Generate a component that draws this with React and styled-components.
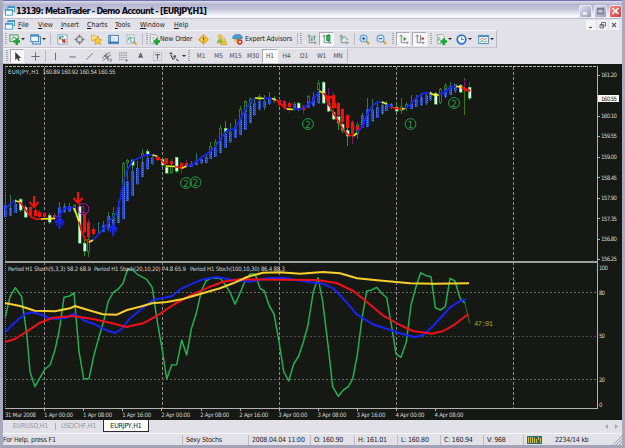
import styled, { createGlobalStyle, css } from "styled-components";

const GlobalStyle = createGlobalStyle`
  * { box-sizing: border-box; }
  body {
    margin: 0;
    overflow: hidden;
    font-family: "DejaVu Sans Condensed", "DejaVu Sans", sans-serif;
    font-size: 7px;
    color: #1c1c24;
  }
  svg { display: block; }
`

// [x, kind, body top, body bottom, wick high, wick low]
const candles = [
  [5.5, "b", 205, 217, 195, 217], [10.4, "b", 208, 216, 195, 216], [15.3, "b", 204, 213, 199, 213],
  [20.3, "w", 199, 210, 198, 212], [25.2, "w", 207, 217, 205, 218], [30, "r", 207, 216, 206, 218],
  [35, "r", 210, 216, 207, 217], [39.9, "r", 212, 217, 210, 219], [44.8, "r", 213, 217, 212, 220],
  [49.7, "w", 215, 222, 213, 224], [54.5, "r", 215, 219, 213, 221], [59.4, "b", 207, 217, 202, 218],
  [64.3, "b", 206, 212, 203, 213], [69.2, "b", 206, 212, 203, 212], [74, "h", 205, 211, 204, 213],
  [79, "w", 206, 243, 204, 244], [84, "w", 243, 251, 238, 256], [84, "r", 214, 232, 212, 234],
  [88.7, "h", 239, 252, 237, 257], [88.7, "r", 222, 237, 219, 237], [93.5, "r", 229, 234, 226, 236],
  [98.4, "d", 229, 231, 222, 235], [103.5, "b", 225, 232, 221, 232], [108.3, "b", 216, 230, 212, 231],
  [113.2, "b", 219, 229, 214, 229], [113.2, "h", 213, 220, 207, 222], [118, "b", 207, 223, 201, 223],
  [123, "h", 163, 200, 162, 200], [123, "b", 186, 219, 186, 219], [127.7, "b", 181, 201, 181, 201],
  [127.7, "h", 160, 163, 159, 180], [132.6, "w", 160, 165, 159, 168], [132.6, "b", 171, 196, 168, 196],
  [137.5, "b", 168, 184, 161, 185], [142.4, "h", 153, 157, 149, 162], [142.4, "b", 162, 177, 160, 177],
  [147.3, "w", 151, 154, 149, 156], [147.3, "b", 158, 169, 156, 170], [152.2, "b", 157, 164, 154, 165],
  [157, "r", 157, 160, 155, 161], [162, "w", 159, 165, 157, 167], [166.9, "r", 158, 164, 158, 164],
  [166.9, "w", 167, 173, 165, 174], [171.8, "r", 161, 164, 159, 164], [171.8, "h", 166, 173, 164, 174],
  [176.6, "w", 157, 171, 157, 173], [181.5, "r", 163, 169, 162, 174], [186.4, "r", 163, 166, 160, 167],
  [191.2, "b", 164, 167, 161, 167], [196.2, "b", 161, 165, 153, 165], [201, "b", 159, 163, 156, 164],
  [206, "b", 157, 163, 153, 163], [210.8, "h", 146, 152, 142, 156], [210.8, "b", 152, 159, 151, 159],
  [215.7, "h", 142, 147, 139, 150], [215.7, "b", 148, 157, 147, 157], [220.6, "h", 128, 140, 125, 143],
  [220.6, "b", 141, 153, 139, 153], [225.5, "w", 128, 132, 121, 135], [225.5, "b", 134, 148, 132, 148],
  [230.4, "b", 132, 142, 123, 143], [235.3, "b", 127, 138, 119, 138], [240.2, "h", 109, 120, 106, 124],
  [240.2, "b", 119, 135, 118, 135], [245, "h", 101, 112, 100, 116], [245, "b", 113, 130, 112, 130],
  [250, "h", 99, 104, 97, 108], [250, "b", 106, 123, 104, 123], [254.8, "b", 103, 115, 98, 116],
  [259.7, "h", 96, 100, 94, 102], [259.7, "b", 101, 109, 99, 111], [264.6, "b", 101, 107, 95, 110],
  [269.5, "b", 97, 104, 92, 105], [274.4, "h", 98, 101, 96, 103], [279.6, "r", 100, 105, 99, 107],
  [284.5, "r", 101, 108, 100, 110], [289, "r", 103, 107, 102, 113], [294, "b", 104, 109, 102, 111],
  [298.8, "w", 103, 108, 102, 111], [303.7, "r", 106, 110, 105, 114], [308.6, "h", 96, 106, 95, 108],
  [308.6, "b", 101, 108, 101, 108], [313.5, "b", 97, 106, 92, 107], [318.4, "h", 83, 90, 80, 93],
  [318.4, "b", 92, 103, 92, 104], [323.3, "w", 82, 103, 81, 104], [328.2, "w", 103, 111, 101, 112],
  [328.2, "r", 97, 105, 88, 106], [333, "w", 112, 119, 110, 120], [333, "r", 95, 108, 92, 111],
  [338, "w", 116, 123, 114, 130], [338, "r", 103, 115, 102, 117], [342.8, "w", 124, 130, 122, 133],
  [342.8, "r", 109, 122, 108, 123], [347.7, "w", 130, 136, 127, 146], [347.7, "r", 115, 128, 114, 128],
  [352.6, "r", 122, 134, 120, 144], [357.5, "h", 124, 134, 122, 139], [357.5, "r", 126, 130, 123, 131],
  [362.4, "b", 115, 128, 113, 128], [367.2, "b", 109, 127, 98, 127], [372.2, "b", 110, 121, 99, 122],
  [377, "b", 107, 118, 103, 118], [382, "b", 105, 114, 101, 115], [386.8, "b", 104, 111, 101, 111],
  [391.7, "b", 104, 108, 103, 109], [396.6, "w", 107, 111, 103, 112], [401.5, "h", 106, 111, 98, 114],
  [406.4, "h", 104, 108, 102, 111], [411.3, "b", 103, 109, 95, 109], [416.2, "b", 99, 107, 95, 107],
  [421, "b", 97, 105, 93, 106], [426, "b", 95, 103, 92, 105], [430.8, "b", 92, 100, 91, 101],
  [435.6, "w", 93, 104, 92, 105], [440.6, "h", 89, 103, 88, 104], [445.4, "h", 85, 89, 83, 97],
  [445.4, "b", 89, 97, 88, 98], [450.4, "b", 86, 95, 82, 95], [455.2, "b", 84, 91, 84, 93],
  [460, "w", 85, 92, 84, 93], [464.9, "l", 88, 88, 78, 115], [469.8, "w", 87, 98, 84, 100],
]

const maLine = [
  ["#1724f5", "5,210 10,204 15,200.7"],
  ["#f7ee10", "15,200.7 20,202"],
  ["#f5100c", "20,202 26.7,211.7 31.7,217.3 36.7,219.3 40.7,219"],
  ["#f7ee10", "40.7,219 55,218.3"],
  ["#1724f5", "55,218 59.3,215 64,209.3 69,207.3 74,208"],
  ["#f7ee10", "74,208 75.3,211 79,221.7"],
  ["#f5100c", "79,221.7 81.7,231.7 85,239.3 89,242.3"],
  ["#f7ee10", "89,242.3 93,240"],
  ["#1724f5", "93,240 100,233 108,222.7 116.7,213.3 120,199.3 123.3,183.3 127.3,170 132.7,160.7 138.3,158.3 146.7,154.7 152.7,155"],
  ["#f7ee10", "152.7,155 157,156.3"],
  ["#f5100c", "157,156.3 162.7,161.7 166,166"],
  ["#f7ee10", "166,166 175,166.5"],
  ["#f5100c", "175,166.5 181.7,168.3"],
  ["#f7ee10", "181.7,168.3 186.7,166"],
  ["#1724f5", "186.7,166 191.7,165 196.7,161.3 203.3,156 210,151.7 216.7,145 221.7,136.7 226.7,130.7 235,128.7 240,120 245,110 250,102.7 255,98"],
  ["#f7ee10", "255,98 264,98.5"],
  ["#1724f5", "264,98.3 270,98 274,100"],
  ["#f7ee10", "272,98.5 276,99.7"],
  ["#f5100c", "276,99.7 281.7,105 286.7,108.8"],
  ["#f7ee10", "286.7,108.8 293,109.5"],
  ["#1724f5", "293,109.2 301.7,109 306.7,105.7 311.7,102.3 316.7,94.3 319.3,91"],
  ["#f7ee10", "319.3,91 323.3,93"],
  ["#f5100c", "323.3,93 325,95 328.3,103.3 333.3,113.3 338.3,121 343.3,130 348.3,135 353.3,136"],
  ["#f7ee10", "353.3,136 357,133"],
  ["#1724f5", "357,133 363.3,125 366.7,115 371.7,106.7 376.7,102.3 381.7,102"],
  ["#f7ee10", "381.7,102 387,104"],
  ["#1724f5", "387,104 391,106.5"],
  ["#f5100c", "391,106.5 395,108.3 401.7,109"],
  ["#f7ee10", "401.7,109 405,108.5"],
  ["#1724f5", "405,108.5 411.7,103.3 416.7,97.3 425,92.7 430,93"],
  ["#f7ee10", "430,93 434,95 439,95"],
  ["#1724f5", "439,95 445,91.7 451.7,87 456,86.3"],
  ["#f7ee10", "456,86.3 461.7,87"],
]

const stoch = {
  green: "5.3,317.3 10,296.7 15.3,287.7 21.7,296.7 23.3,310 26.7,333.3 30,371.7 35,386.7 40,377.7 45,369 50,365 55,350 59.3,330 64,297.3 69,296.3 74,293 79,351.7 83.7,378.7 89,378.7 94,355 99,336.7 104,320 108.3,301 113.3,292.3 118.3,289 123,283.3 127.7,269 132.3,269.7 137.3,274.3 146.7,279.3 152.3,287.7 157.3,321.7 162.3,350 166.7,379 171.7,365 176.7,364.7 181.7,340 186.7,355 191.3,329 196.7,311.7 201.3,291 206,281 210.7,278.3 220,278.3 225,284.3 230,292.3 235,304.3 240,293.3 245,281 250,274 255,274 260,288.3 264.3,291 269.3,306 274,314 279,341.7 283.7,371.7 288.7,381 293.7,364 298.7,356 303.3,342.3 308,325 313.3,291.7 318,277.7 322.7,301.7 328,345 332.7,386.7 338.3,396.3 343.3,390 348.3,386.7 352.7,379 357.3,355 362,318.3 366.7,291 371.7,290 376.7,287.3 381.7,293.3 386.7,297.7 391.7,326.7 396,354 401,357.3 406.3,342 411,305 416,286.7 420.7,272.7 426,275.7 431,276.7 435.3,307.7 440.3,310 445.3,306.7 450,278.3 455,281 460,298.3 465,303.3",
  greenTail: "465,303.3 467.5,314 469.7,323.3",
  yellow: "5,303 20,306 35,310.7 55,311.3 70,308.3 75,306 88,310 103,314.3 117,314.7 127,310 140,306.7 152,303.3 167,302 183,299 200,294 220,288.3 233,283.3 247,277 263,272.7 280,272.3 300,273.7 323,272 340,273.3 357,278.3 377,280.3 410,283.3 433,283.7 469,283.3",
  blue: "5,332.3 15,322.3 25,314 31.7,312.3 40,314.3 48.3,317.7 55,319 66.7,317.7 74,313.7 85,321 95,324.3 106.7,330.3 115,333 121.7,329 130,318.3 143.3,307.7 153.3,299.7 171.7,296.3 181.7,288.3 201.7,279.7 216.7,277 233,280 250,281.7 267,278.3 283,277.7 300,280.7 323,283.7 333,288.3 343,298.3 356.7,314.3 373,324.3 400,333.3 415,337.3 423.3,335 433.3,325.7 443.3,315 450,307.3 460,301 466,299.3",
  red: "5,342 15,339 26.7,331.7 40,322.7 53,317.7 73,316 93,319 110,322.7 126.7,327 143,323.3 156.7,316 173,305 190,295.7 210,286.7 223,281.7 240,279.3 283,279.7 317,280 336.7,283 353.3,291 366.7,301.7 383.3,315.7 400,325 413,331 431.7,333.7 443.3,331 455,324.3 468.3,314",
}

const prices = [["161.20", 74.5], ["160.10", 115.5], ["159.55", 136], ["159.00", 156.5], ["158.45", 177.3], ["157.90", 197.8], ["157.35", 218.3], ["156.80", 238.8], ["156.25", 259.2]]
const levels = [["100", 267.5], ["80", 292.5], ["50", 336], ["20", 379.5], ["0", 404.5]]
const days = [44.5, 162.5, 279.5, 396.5, 513.5]
const times = ["31 Mar 2008", "1 Apr 00:00", "1 Apr 08:00", "1 Apr 16:00", "2 Apr 00:00", "2 Apr 08:00", "2 Apr 16:00", "3 Apr 00:00", "3 Apr 08:00", "3 Apr 16:00", "4 Apr 00:00", "4 Apr 08:00"]
const signals = [[83.5, 209, "1", "#a31ba8"], [186, 183, "2"], [195.5, 182.3, "2"], [308, 124, "2"], [410.5, 124, "1"], [454, 103, "2"]]

const wick = { b: "#2c7a5c", r: "#7d1a5c", w: "#2c9a3c", h: "#2c7a24", d: "#127a8a", l: "#3e7a14" }

const Candle = ({ data }) => {
  const [cx, kind, top, bottom, high, low] = data
  const x = Math.round(cx - 0.5)
  return (
    <g shapeRendering="crispEdges">
      <rect x={x} y={high} width="1" height={low - high} fill={wick[kind]} />
      {kind === "b" && <rect x={x - 1} y={top} width="3" height={bottom - top} fill="url(#blueBar)" />}
      {kind === "r" && <rect x={x - 1} y={top} width="3" height={bottom - top} fill="#f5100c" />}
      {kind === "w" && <rect x={x - 1} y={top} width="3" height={bottom - top} fill="#d9ffe0" stroke="#22a040" strokeWidth=".6" />}
      {kind === "h" && <rect x={x - 0.5} y={top + 0.5} width="2" height={bottom - top - 1} fill="#151813" stroke="#2a7a2a" />}
    </g>
  )
}

const Arrow = ({ x, y, up }) => (
  <g transform={`translate(${x} ${y}) scale(1 ${up ? -1 : 1})`} fill="none" stroke={up ? "#1724f5" : "#f5100c"} strokeWidth="2">
    <path d="M0-6V5M-4.5 0L0 5L4.5 0" />
    {up && <path d="M-3.5-2.5L0 1.5L3.5-2.5" strokeWidth="1.2" />}
  </g>
)

const PriceChart = () => (
  <ChartST viewBox="3 64 619 356">
    <defs>
      <pattern id="blueBar" width="3" height="2" patternUnits="userSpaceOnUse">
        <rect width="3" height="2" fill="#2548c4" />
        <rect x="1" width="1" height="1" fill="#5c86e6" />
      </pattern>
    </defs>
    <rect x="3" y="64" width="619" height="356" fill="#151813" />
    <g shapeRendering="crispEdges" stroke="#b4b4b4" fill="none">
      <path d="M5 66.5H598" strokeDasharray="3 1" />
      <path d="M5.5 66V408" stroke="#84867f" strokeDasharray="1 1" />
      {days.map((x) => <path key={x} d={`M${x} 67V408`} stroke="#8c8c8c" strokeDasharray="3 2" />)}
      {[292.5, 336.5, 379.5].map((y) => <path key={y} d={`M6 ${y}H597`} stroke={y === 336.5 ? "#4c4f49" : "#666963"} strokeDasharray="2 2" />)}
      <path d="M597.5 66V409M5 408.5H598" />
      <path d="M5 262H598" stroke="#a0a0a0" strokeWidth="2" />
      {times.map((t, i) => i > 0 && <path key={t} d={`M${Math.round(5 + i * 39.1)}.5 408V411`} />)}
      {prices.map(([p, y]) => <path key={p} d={`M597 ${Math.round(y)}.5H600`} />)}
    </g>

    {candles.map((c, i) => <Candle key={i} data={c} />)}
    <g shapeRendering="crispEdges" fill="#7e0c84">
      <rect x="464" y="80" width="1" height="7" />
      <rect x="469" y="82" width="1" height="5" />
      <rect x="328" y="88" width="1" height="9" />
    </g>
    <g fill="none" strokeWidth="1.7">
      {maLine.map(([color, points], i) => <polyline key={i} points={points} stroke={color} />)}
      <path d="M461.7 87L465.5 89.5L470 91" stroke="#f5100c" strokeWidth="3" />
      <path d="M325 96L333 98L336 108" stroke="#f5100c" strokeWidth="2.5" />
    </g>

    <Arrow x={34} y={202} />
    <Arrow x={78} y={198} />
    <Arrow x={59.5} y={223} up />
    <Arrow x={113} y={230} up />

    {signals.map(([x, y, n, color = "#1fa04a"]) => (
      <g key={x}>
        <circle cx={x} cy={y} r="5.4" fill="none" stroke={color} />
        <text x={x} y={y + 3.5} fill={color} fontSize="9.5" textAnchor="middle">{n}</text>
      </g>
    ))}

    <g fill="none" strokeLinejoin="round">
      <polyline points={stoch.green} stroke="#22b052" strokeWidth="1.5" />
      <polyline points={stoch.greenTail} stroke="#266a2c" strokeWidth="1.2" />
      <polyline points={stoch.blue} stroke="#1724f5" strokeWidth="2" />
      <polyline points={stoch.red} stroke="#f0101c" strokeWidth="2" />
      <polyline points={stoch.yellow} stroke="#f7cf2e" strokeWidth="2" />
    </g>

    <g fill="#d2d4d0" fontSize="6">
      <text x="8" y="74" textLength="31">EURJPY,H1</text>
      <text x="42.5" y="74" textLength="73">160.89 160.92 160.54 160.55</text>
      <text x="8" y="271" textLength="83">Period H1 Stoch(5,3,3) 58.2 68.9</text>
      <text x="94" y="271" textLength="92">Period H1 Stoch(20,10,20) 74.8 65.9</text>
      <text x="190" y="271" textLength="95">Period H1 Stoch(100,10,30) 86.4 88.3</text>
      {prices.map(([p, y]) => <text key={p} x="601" y={y + 2.2} textLength="16">{p}</text>)}
      {levels.map(([l, y]) => <text key={l} x="599" y={y + 2.2} textLength={l.length * 3}>{l}</text>)}
      {times.map((t, i) => <text key={t} x={5 + i * 39.05} y="416.5" textLength={i ? 29 : 31}>{t}</text>)}
    </g>
    <rect x="598" y="95" width="21" height="7" fill="#fff" />
    <text x="601" y="100.7" fontSize="6" textLength="16" fill="#111">160.55</text>
    <text x="474" y="325.5" fontSize="7" textLength="19" fill="#b3aa1e" fontFamily="Liberation Mono">47:01</text>
  </ChartST>
)

const ChartArrows = () => <path d="M3.500 1V9.500H11M2 3L3.500 1L5 3M9.500 8L11 9.500L9.500 11" stroke="#7b8580" />
const Plus = () => <path d="M8.500 4.500V12M4.700 8.200H12.300" stroke="#14a82c" strokeWidth="2.800" />
const Page = () => <path d="M1.500 .5H7L9 2.500V10.500H1.500Z" fill="#f4f7f4" stroke="#8d98a0" strokeWidth=".8" />

const drawings = {
  app: <><rect x="3.500" y=".5" width="8" height="6" fill="#dcf1fa" stroke="#3b93c5" /><rect x=".5" y="4" width="8.500" height="7" fill="#f2fbff" stroke="#3b93c5" /><path d="M.5 5H9M3.500 1.500H11.500" stroke="#3b93c5" strokeWidth="1.500" /></>,
  newChart: <><rect x="1" y="1" width="9" height="7" fill="#e3f4e6" stroke="#468a5a" /><path d="M3 6L5 3L8 5" stroke="#468a5a" /><Plus /></>,
  profiles: <><rect x="3" y="3" width="8.500" height="8" fill="#c5e0f5" stroke="#4580b4" /><rect x=".8" y=".8" width="8.500" height="7.500" fill="#eaf6ff" stroke="#4580b4" /><path d="M1 2H9" stroke="#3b80c0" strokeWidth="1.600" /></>,
  market: <><rect x="1" y="1" width="10" height="10" fill="#f5faff" stroke="#78a4c8" /><path d="M3.500 2.500V6" stroke="#2fa848" strokeWidth="2.200" /><path d="M5 3H7" stroke="#3070d0" strokeWidth="1.500" /><path d="M5.500 5.500L9 9.500M9 5.800L6 9" stroke="#e23a2a" strokeWidth="2" /></>,
  navigator: <><circle cx="6" cy="6" r="3.300" stroke="#777d85" strokeWidth="1.200" /><path d="M6 .5V4M6 8V11.500M.5 6H4M8 6H11.500" stroke="#777d85" strokeWidth="1.600" /></>,
  favorites: <><path d="M.5 1.500H4L5 2.500H8V7.500H.5Z" fill="#fbdf7a" stroke="#c99b2a" strokeWidth=".7" /><path d="M7.500 3L8.900 5.800L12 6.200L9.700 8.300L10.300 11.500L7.500 10L4.500 11.500L5.200 8.300L3 6.200L6 5.800Z" fill="#fccc2c" stroke="#c08a18" strokeWidth=".6" /></>,
  terminal: <><rect x=".8" y="1.500" width="10.500" height="9" fill="#eef7ff" stroke="#3e78b0" /><path d="M2.500 2V10M1 9H11" stroke="#3e78b0" strokeWidth="1.400" /><path d="M4.500 4.500H9.500M4.500 6.500H8" stroke="#a9c5dc" strokeWidth=".8" /></>,
  tester: <><rect x="1" y="1" width="8" height="9" fill="#e8f2ee" stroke="#93a7ad" strokeWidth=".7" /><path d="M2 7L4 3L6 6" stroke="#38a050" /><circle cx="7" cy="6.500" r="2.500" fill="#d8eefa" stroke="#779bb0" /><path d="M8.800 8.500L11.500 11.500" stroke="#c8a02a" strokeWidth="1.700" /></>,
  order: <><Page /><path d="M3 3.500H7M3 5.500H6" stroke="#8d98a0" strokeWidth=".7" /><Plus /></>,
  alert: <><path d="M6 .8L11.300 6L6 11.200L.7 6Z" fill="#fcca34" stroke="#c38e18" /><path d="M6 3.300V7M6 7.800V9" stroke="#7a5510" strokeWidth="1.300" /></>,
  people: <><circle cx="4.500" cy="3" r="2.200" fill="#f7cd36" stroke="#c39a20" strokeWidth=".6" /><path d="M1 10C1 4 8 4 8 10Z" fill="#8cbf3c" /><path d="M5 11.500C5 6.500 12 6.500 12 11.500Z" fill="#f2c62c" stroke="#b5901e" strokeWidth=".6" /><circle cx="8.500" cy="6.500" r="1.900" fill="#f8dd62" stroke="#b5901e" strokeWidth=".6" /></>,
  expert: <><path d="M1 5L5 10.500L10 5L9 3.500H2Z" fill="#f3c552" /><path d="M.5 4.500Q2-.5 6 .8Q10-.5 11.500 4.500L6 5.800Z" fill="#4a9fd0" stroke="#2c729e" strokeWidth=".7" /><circle cx="8.500" cy="8.700" r="3" fill="#e0301e" /><rect x="7.400" y="7.600" width="2.200" height="2.200" fill="#fff" /></>,
  bars: <><ChartArrows /><path d="M6.500 2.500V8M6.500 6.500H5M9 1.500V7M9 3H10.500" stroke="#36915a" /></>,
  candles: <><ChartArrows /><path d="M8 0V9" stroke="#168a38" /><rect x="6.300" y="1.500" width="3.400" height="5.500" fill="#23c04a" stroke="#168a38" /></>,
  line: <><ChartArrows /><path d="M4 6C6 1 8 3 10.500 6.500" stroke="#389a58" /></>,
  zoomIn: <><path d="M7.500 7.500L11 11" stroke="#cf9f20" strokeWidth="2.200" /><circle cx="5" cy="5" r="3.800" fill="#dff0fc" stroke="#5a9fd6" strokeWidth="1.200" /><path d="M5 3V7M3 5H7" stroke="#2a63bb" strokeWidth="1.200" /></>,
  zoomOut: <><path d="M7.500 7.500L11 11" stroke="#cf9f20" strokeWidth="2.200" /><circle cx="5" cy="5" r="3.800" fill="#dff0fc" stroke="#5a9fd6" strokeWidth="1.200" /><path d="M3 5H7" stroke="#2a63bb" strokeWidth="1.200" /></>,
  scroll: <><ChartArrows /><path d="M6 3L9.500 5.500L6 8Z" fill="#2fa848" /></>,
  shift: <><ChartArrows /><path d="M7 1V8" stroke="#6b7580" /><path d="M11 5H8M9.500 3.500V6.500" stroke="#d23b2a" strokeWidth="1.200" /></>,
  indicator: <><Page /><path d="M3 8V5C3 3 4 3 5 3M2.500 5.500H5" stroke="#6f7d86" strokeWidth=".8" /><Plus /></>,
  clock: <><circle cx="6" cy="6" r="4.700" fill="#f3f9ff" stroke="#2d74c8" strokeWidth="1.900" /><path d="M6 3.500V6H8.500" stroke="#41618a" strokeWidth=".9" /></>,
  template: <><rect x=".8" y="1.500" width="10.500" height="9" fill="#eef7ff" stroke="#4a84b8" /><path d="M1 2.500H11" stroke="#4a84b8" strokeWidth="1.600" /><path d="M2.500 6L5 4.800L7 6L9.500 4.800" stroke="#cc4a32" strokeWidth=".8" /><path d="M2.500 8.500L5 7.300L7 8.800L9.500 7.500" stroke="#3a9a52" strokeWidth=".8" /></>,
  cursor: <path d="M3.500 1V10L5.500 8L7 11L8.500 10.300L7.200 7.500H10Z" fill="#383a40" />,
  cross: <path d="M6 1.500V10.500M1.500 6H10.500" stroke="#606269" />,
  vline: <path d="M6 2V10" stroke="#606269" />,
  hline: <path d="M2.500 6.500H9.500" stroke="#606269" />,
  trend: <path d="M2.500 9.500L9.500 2.500" stroke="#70727a" />,
  channel: <><path d="M1 8L10 1M2 10.500L11 4M3 4L8 9M5.500 2V7M7.500 5V11" stroke="#606269" strokeWidth=".9" /><path d="M9 9H12M9 11H12" stroke="#606269" strokeWidth=".8" /></>,
  fibo: <><path d="M1 2H10M1 4.500H10M1 7H10M1 9.500H7" stroke="#888b92" strokeDasharray="1.500 .4" /><path d="M9 9V12M8 10H11" stroke="#606269" strokeWidth=".8" /></>,
  shapes: <><path d="M1 3L4 1L5 4ZM5 6L8 4L9 7Z" fill="#4b4d54" /><path d="M3 4.500L5.500 9L8 7M9 9L11.500 11" stroke="#4b4d54" strokeWidth="1.200" /></>,
  label: <><rect x="1.500" y="1.500" width="9" height="9" stroke="#9a9ca2" strokeDasharray="1 1" /><path d="M3.500 4H8.500M6 4V9" stroke="#666870" strokeWidth="1.200" /></>,
}

const Icon = ({ name, size = 11 }) => <svg width={size} height={size} viewBox="0 0 12 12" fill="none">{drawings[name]}</svg>

// widths follow one another, "|" is a separator and "::" a grip
const mainTools = [
  ["::", 5], ["newChart", 12], ["▾", 6], ["", 3], ["profiles", 12], ["▾", 6], ["|", 7],
  ["market", 17], ["navigator", 17], ["favorites", 17], ["terminal", 17], ["tester", 18], ["|", 5], ["::", 4],
]
const chartTools = [
  ["bars", 16], ["candles", 15, true], ["line", 19], ["|", 3], ["zoomIn", 17], ["zoomOut", 17],
  ["::", 6], ["scroll", 14, true], ["", 2], ["shift", 15, true], ["::", 8], ["indicator", 12], ["▾", 5],
  ["", 3], ["clock", 12], ["▾", 5], ["", 5], ["template", 12], ["▾", 5],
]
const lineTools = [
  ["::", 7], ["cursor", 14, true], ["", 3], ["cross", 16], ["|", 4], ["vline", 16], ["hline", 18], ["trend", 17],
  ["channel", 17], ["fibo", 17],
]
const frames = [["M1", 18], ["M5", 17], ["M15", 17], ["M30", 18], ["H1", 16, true], ["H4", 17], ["D1", 18], ["W1", 17], ["MN", 16]]

const Tools = ({ items }) => items.map(([name, width, pressed], i) => {
  if (name === "|") return <SeparatorST key={i} $width={width} />
  if (name === "::") return <GripST key={i} $width={width} />
  return (
    <ToolST key={i} $width={width} $pressed={pressed}>
      {name === "▾" ? <CaretST /> : name && <Icon name={name} />}
    </ToolST>
  )
})

const App = () => (
  <WindowST>
    <GlobalStyle />
    <TitleBarST>
      <Icon name="app" size={10} />
      <TitleST>13139: MetaTrader - Demo Account - [EURJPY,H1]</TitleST>
      <CaptionButtonST><svg width="11" height="10"><path d="M3 7.500H7" stroke="#fff" strokeWidth="2" /></svg></CaptionButtonST>
      <CaptionButtonST><svg width="11" height="10"><path d="M2.500 2.500H8.500V7.500H2.500ZM2 3H9" fill="none" stroke="#777b91" strokeWidth="1.300" /></svg></CaptionButtonST>
      <CaptionButtonST $close><svg width="11" height="10"><path d="M2.500 2L8.500 8M8.500 2L2.500 8" stroke="#fff" strokeWidth="1.600" /></svg></CaptionButtonST>
    </TitleBarST>

    <MenuBarST>
      <Icon name="app" size={10} />
      {[["File", 20], ["View", 23], ["Insert", 26], ["Charts", 28], ["Tools", 25], ["Window", 34], ["Help", 18]].map(([label, width]) => (
        <MenuItemST key={label} $width={width}><u>{label[0]}</u>{label.slice(1)}</MenuItemST>
      ))}
      <MdiButtonsST width="34" height="10" viewBox="0 0 34 10" fill="none" stroke="#5e616c">
        <rect x="0" y="0" width="10" height="10" fill="#f4f4f7" stroke="none" />
        <rect x="11.500" y="0" width="10" height="10" fill="#f4f4f7" stroke="none" />
        <rect x="23" y="0" width="10" height="10" fill="#f4f4f7" stroke="none" />
        <path d="M3 7.500H6" strokeWidth="1.300" />
        <path d="M15.500 2.500H19.500V6H15.500ZM14 4.500H17.500V8H14Z" strokeWidth=".9" />
        <path d="M26 3L30 7M30 3L26 7" strokeWidth="1.200" />
      </MdiButtonsST>
    </MenuBarST>

    <ToolBarST $height={18} $width={494}>
      <Tools items={mainTools} />
      <LabeledToolST $width={47}><Icon name="order" /><span>New Order</span></LabeledToolST>
      <Tools items={[["alert", 14], ["people", 22]]} />
      <LabeledToolST $width={64} $gap={2}><Icon name="expert" /><span>Expert Advisors</span></LabeledToolST>
      <Tools items={[["|", 3], ["::", 4]]} />
      <Tools items={chartTools} />
    </ToolBarST>
    <ToolBarST $height={16} $width={345}>
      <Tools items={lineTools} />
      <ToolST $width={17}><b>A</b></ToolST>
      <Tools items={[["label", 17], ["shapes", 15], ["▾", 5], ["::", 6]]} />
      {frames.map(([label, width, pressed]) => (
        <ToolST key={label} $width={width} $pressed={pressed}>{label}</ToolST>
      ))}
    </ToolBarST>

    <PriceChart />

    <TabsST>
      <TabST $width={49}>EURUSD,H1</TabST>
      <TabST $width={47} $divider>USDCHF,H1</TabST>
      <TabST $width={46} $active>EURJPY,H1</TabST>
      <ScrollersST width="16" height="7"><path d="M4 1V6L1 3.500ZM11 1V6L14 3.500Z" fill="#a6a6b2" /></ScrollersST>
    </TabsST>
    <StatusBarST>
      <StatusST $width={179}>For Help, press F1</StatusST>
      <StatusST $width={66}>Sexy Stochs</StatusST>
      <StatusST $width={62}>2008.04.04 11:00</StatusST>
      <StatusST $width={44}>O: 160.90</StatusST>
      <StatusST $width={43}>H: 161.01</StatusST>
      <StatusST $width={43}>L: 160.80</StatusST>
      <StatusST $width={43}>C: 160.94</StatusST>
      <StatusST $width={40}>V: 968</StatusST>
      <StatusST $width={28}>
        <svg width="15" height="8" shapeRendering="crispEdges">
          <rect width="15" height="8" fill="#2c6d7c" />
          <path d="M1.500 1V7M3.500 1V7M5.500 1V7M7.500 2V7M9.500 3V7M11.500 1V4M13.500 2V7" stroke="#c5bd48" />
        </svg>
      </StatusST>
      <StatusST $width={60} $plain>2234/14 kb</StatusST>
      <SizeGripST width="9" height="9"><path d="M0 9L9 0M3 9L9 3M6 9L9 6" stroke="#a2a2b0" /></SizeGripST>
    </StatusBarST>
  </WindowST>
)

export default App;

const WindowST = styled.div`
width: 625px;
height: 448px;
display: flex;
flex-direction: column;
border-left: 3px solid #a9a9bd;
border-right: 3px solid #a9a9bd;
border-bottom: 3px solid #a3a3b8;
background-color: #e2e1e7;
overflow: hidden;
white-space: nowrap;
`

const TitleBarST = styled.div`
flex: none;
display: flex;
align-items: center;
gap: 1px;
height: 19px;
margin: 0 -3px;
padding: 2px 3px 0 5px;
border-top: 1px solid #6d72ae;
border-radius: 3px 3px 0 0;
background: linear-gradient(#dcdce9 0, #b5b5d0 20%, #c3c3da 45%, #e9e9f2 70%, #fff 90%, #a5a5bb 100%);
`

const TitleST = styled.div`
flex: 1;
font-size: 9px;
font-weight: 700;
letter-spacing: -0.75px;
color: #0c0c14;
`

const CaptionButtonST = styled.div`
width: 13px;
height: 13px;
margin-left: 1px;
display: flex;
align-items: center;
justify-content: center;
border: 1px solid #e8e8f4;
border-radius: 2px;
background: ${({ $close }) => $close ? "linear-gradient(135deg, #ee8f88, #d5383c)" : "linear-gradient(135deg, #e0e0ec, #9a9cba)"};
`

const MenuBarST = styled.div`
flex: none;
display: flex;
align-items: center;
height: 12px;
padding: 0 2px;

svg:first-child {
  margin-right: 3px;
}
`

const MenuItemST = styled.div`
width: ${({ $width }) => $width}px;
flex: none;

u {
  text-underline-offset: 1px;
}
`

const MdiButtonsST = styled.svg`
margin-left: auto;
`

const ToolBarST = styled.div`
flex: none;
display: flex;
align-items: center;
width: ${({ $width }) => $width}px;
height: ${({ $height }) => $height}px;
margin-top: -1px;
border-top: 1px solid #f6f6fa;
border-right: 1px solid #b9b8c6;
border-bottom: 1px solid #c6c5d0;

& + & {
  margin-top: 0;
}
`

const ToolST = styled.div`
flex: none;
display: flex;
align-items: center;
justify-content: center;
width: ${({ $width }) => $width}px;
height: 14px;
font-size: 6.5px;
letter-spacing: -0.15px;
color: #4a4b54;

svg {
  flex: none;
}

${({ $pressed }) => $pressed && css`
  border: 1px solid #a9a9b6;
  border-right-color: #fff;
  border-bottom-color: #fff;
  background-color: #f8f8fa;
`}
`

const LabeledToolST = styled(ToolST)`
justify-content: flex-start;
gap: ${({ $gap = 0 }) => $gap}px;
font-size: 7px;
color: #1c1c24;
`

const CaretST = styled.i`
border: 2px solid transparent;
border-top-color: #26262c;
border-bottom: 0;
`

const SeparatorST = styled.div`
flex: none;
width: ${({ $width }) => $width}px;
height: 12px;
background: linear-gradient(#b9b8c4, #b9b8c4) center / 1px 100% no-repeat;
`

const GripST = styled(SeparatorST)`
background: repeating-linear-gradient(#a9a8b6 0 1px, transparent 1px 2px) center / 2px 100% no-repeat;
`

const ChartST = styled.svg`
flex: none;
width: 619px;
height: 356px;
`

const TabsST = styled.div`
flex: none;
display: flex;
height: 14px;
padding-left: 3px;
border-bottom: 1px solid #f8f8fb;
`

const TabST = styled.div`
display: flex;
align-items: center;
justify-content: center;
width: ${({ $width }) => $width}px;
height: 12px;
letter-spacing: -0.2px;
color: #97969c;

${({ $divider }) => $divider && css`
  background: linear-gradient(#a9a8b0, #a9a8b0) left center / 1px 7px no-repeat;
`}

${({ $active }) => $active && css`
  margin-left: 1px;
  border: 1px solid #2c2c30;
  border-top: 0;
  background-color: #fff;
  color: #111;
`}
`

const ScrollersST = styled.svg`
margin: 3px 2px 0 auto;
`

const StatusBarST = styled.div`
flex: 1;
display: flex;
align-items: center;
`

const StatusST = styled.div`
display: flex;
align-items: center;
width: ${({ $width }) => $width}px;
height: 10px;
padding-left: 3px;
letter-spacing: -0.22px;
border-left: 1px solid ${({ $plain }) => $plain ? "transparent" : "#bcbbc8"};

&:first-child {
  padding-left: 0;
  border-left: 0;
}
`

const SizeGripST = styled.svg`
margin: auto 0 0 auto;
`
